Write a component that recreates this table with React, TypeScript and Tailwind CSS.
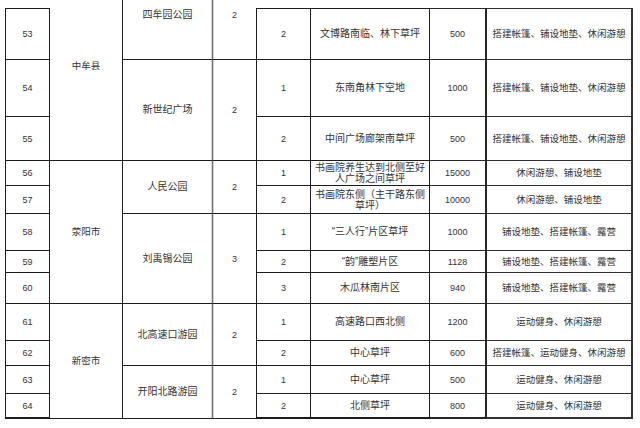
import React from "react";

const base =
  "flex items-center justify-center text-center text-[#333] leading-[12px]";
const F = "font-['Liberation_Sans','Noto_Sans_CJK_SC',sans-serif]";

function Num({ n, cls }: { n: string; cls: string }) {
  return (
    <div className={`${base} text-[9px] text-[#3a3a3a] ${cls}`}>{n}</div>
  );
}

type Row = {
  no: string;
  site: string;
  place: React.ReactNode;
  area: string;
  use: string;
  top?: boolean;
  last?: boolean;
};

const rows: Row[] = [
  { no: "53", site: "2", place: "文博路南临、林下草坪", area: "500", use: "搭建帐篷、铺设地垫、休闲游憩", top: true },
  { no: "54", site: "1", place: "东南角林下空地", area: "1000", use: "搭建帐篷、铺设地垫、休闲游憩" },
  { no: "55", site: "2", place: "中间广场廊架南草坪", area: "500", use: "搭建帐篷、铺设地垫、休闲游憩" },
  {
    no: "56",
    site: "1",
    place: (
      <span className="leading-[11px]">
        书画院养生达到北侧至好
        <br />
        人广场之间草坪
      </span>
    ),
    area: "15000",
    use: "休闲游憩、铺设地垫",
  },
  {
    no: "57",
    site: "2",
    place: (
      <span className="leading-[11px]">
        书画院东侧（主干路东侧
        <br />
        草坪）
      </span>
    ),
    area: "10000",
    use: "休闲游憩、铺设地垫",
  },
  { no: "58", site: "1", place: "“三人行”片区草坪", area: "1000", use: "铺设地垫、搭建帐篷、露营" },
  { no: "59", site: "2", place: "“韵”雕塑片区", area: "1128", use: "铺设地垫、搭建帐篷、露营" },
  { no: "60", site: "3", place: "木瓜林南片区", area: "940", use: "铺设地垫、搭建帐篷、露营" },
  { no: "61", site: "1", place: "高速路口西北侧", area: "1200", use: "运动健身、休闲游憩" },
  { no: "62", site: "2", place: "中心草坪", area: "600", use: "搭建帐篷、运动健身、休闲游憩" },
  { no: "63", site: "1", place: "中心草坪", area: "500", use: "运动健身、休闲游憩" },
  { no: "64", site: "2", place: "北侧草坪", area: "800", use: "运动健身、休闲游憩", last: true },
];

const rowStarts = [
  "row-start-2",
  "row-start-3",
  "row-start-4",
  "row-start-5",
  "row-start-6",
  "row-start-7",
  "row-start-8",
  "row-start-9",
  "row-start-10",
  "row-start-11",
  "row-start-12",
  "row-start-13",
];

export default function App() {
  const L = "border-[#1c1c1c]";
  return (
    <div className={`w-[640px] h-[428px] bg-white overflow-hidden ${F}`}>
      <div className="ml-[5px] grid grid-cols-[45px_73px_90px_43px_55px_119px_57px_146px] grid-rows-[8px_52px_57px_44px_25px_28px_37px_22px_31px_37px_25px_28px_25px]">
        {/* county column */}
        <div className={`col-start-2 row-start-1 row-span-4 border-r border-b ${L} flex items-start justify-center pt-[60px] text-[9.5px] leading-[12px] text-[#333]`}>
          中牟县
        </div>
        <div className={`col-start-2 row-start-5 row-span-5 border-r border-b ${L} ${base} text-[9.5px]`}>
          荥阳市
        </div>
        <div className={`col-start-2 row-start-10 row-span-4 border-r border-b ${L} ${base} text-[9.5px]`}>
          新密市
        </div>

        {/* park column */}
        <div className="col-start-3 row-start-1 row-span-2 border-r border-b border-b-[#1c1c1c] border-r-[#707070] shadow-[inset_-1px_0_0_#d4d4d4] flex items-start justify-center pt-[9px] text-[10px] leading-[12px] text-[#333]">
          四牟园公园
        </div>
        <div className={`col-start-3 row-start-3 row-span-2 border-r border-b border-b-[#1c1c1c] border-r-[#707070] shadow-[inset_-1px_0_0_#d4d4d4] ${base} text-[10px]`}>
          新世纪广场
        </div>
        <div className={`col-start-3 row-start-5 row-span-2 border-r border-b border-b-[#1c1c1c] border-r-[#707070] shadow-[inset_-1px_0_0_#d4d4d4] ${base} text-[10px]`}>
          人民公园
        </div>
        <div className={`col-start-3 row-start-7 row-span-3 border-r border-b border-b-[#1c1c1c] border-r-[#707070] shadow-[inset_-1px_0_0_#d4d4d4] ${base} text-[10px]`}>
          刘禹锡公园
        </div>
        <div className={`col-start-3 row-start-10 row-span-2 border-r border-b border-b-[#1c1c1c] border-r-[#707070] shadow-[inset_-1px_0_0_#d4d4d4] ${base} text-[10px]`}>
          北高速口游园
        </div>
        <div className={`col-start-3 row-start-12 row-span-2 border-r border-b border-b-[#1c1c1c] border-r-[#707070] shadow-[inset_-1px_0_0_#d4d4d4] ${base} text-[10px]`}>
          开阳北路游园
        </div>

        {/* count column */}
        <div className={`col-start-4 row-start-1 row-span-2 border-b ${L} shadow-[inset_1px_0_0_#d4d4d4] flex items-start justify-center pt-[9px] text-[9px] leading-[12px] text-[#3a3a3a]`}>
          2
        </div>
        <Num n="2" cls={`col-start-4 row-start-3 row-span-2 border-b ${L} shadow-[inset_1px_0_0_#d4d4d4]`} />
        <Num n="2" cls={`col-start-4 row-start-5 row-span-2 border-b ${L} shadow-[inset_1px_0_0_#d4d4d4]`} />
        <Num n="3" cls={`col-start-4 row-start-7 row-span-3 border-b ${L} shadow-[inset_1px_0_0_#d4d4d4]`} />
        <Num n="2" cls={`col-start-4 row-start-10 row-span-2 border-b ${L} shadow-[inset_1px_0_0_#d4d4d4]`} />
        <Num n="2" cls={`col-start-4 row-start-12 row-span-2 border-b ${L} shadow-[inset_1px_0_0_#d4d4d4]`} />

        {/* per-row cells */}
        {rows.map((r, i) => {
          const rs = rowStarts[i];
          const t = r.top ? "border-t" : "";
          const b = r.last ? "border-b-2" : "border-b";
          return (
            <React.Fragment key={r.no}>
              <Num n={r.no} cls={`col-start-1 ${rs} border-l border-r ${b} ${t} ${L}`} />
              <Num n={r.site} cls={`col-start-5 ${rs} border-l border-r ${b} ${t} ${L}`} />
              <div className={`col-start-6 ${rs} border-r ${b} ${t} ${L} ${base} text-[10px]`}>
                {r.place}
              </div>
              <Num n={r.area} cls={`col-start-7 ${rs} border-r-2 ${b} ${t} border-[#262626]`} />
              <div className={`col-start-8 ${rs} border-r-2 ${b} ${t} border-[#303030] ${base} text-[9.5px]`}>
                {r.use}
              </div>
            </React.Fragment>
          );
        })}
      </div>
    </div>
  );
}
